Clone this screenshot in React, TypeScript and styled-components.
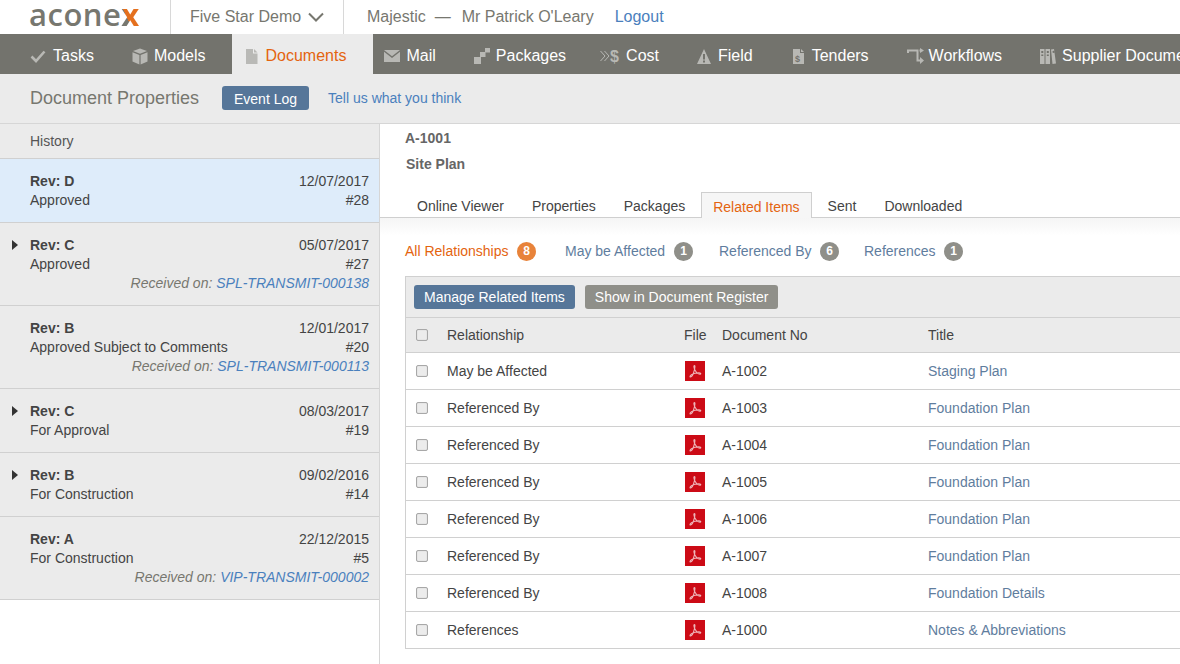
import React from "react";
import styled, { createGlobalStyle } from "styled-components";

const Global = createGlobalStyle`
  html, body { margin: 0; padding: 0; background: #fff; }
  body { font-family: "Liberation Sans", Arial, sans-serif; font-size: 14px; color: #444; }
  * { box-sizing: border-box; }
`;

const Page = styled.div`
  width: 1180px;
  height: 664px;
  overflow: hidden;
  display: flex;
  flex-direction: column;
`;

const TopBar = styled.header`
  height: 34px;
  display: flex;
  align-items: stretch;
  font-size: 16px;
  color: #77776f;
`;
const Logo = styled.div`
  width: 170px;
  padding: 0 0 0 29px;
  font-family: "Open Sans", sans-serif;
  font-size: 31px;
  font-weight: 600;
  letter-spacing: 0.5px;
  color: #77776f;
  line-height: 28px;
  height: 34px;
`;
const LogoX = styled.span`
  font-weight: 700;
  color: transparent;
  background: linear-gradient(to top right, #77776f 36%, #e4701e 36%);
  -webkit-background-clip: text;
  background-clip: text;
`;
const Project = styled.div`
  width: 174px;
  border-left: 1px solid #d8d8d8;
  border-right: 1px solid #d8d8d8;
  padding-left: 19px;
  display: flex;
  align-items: center;
  gap: 7px;
`;
const Who = styled.div`
  padding-left: 23px;
  display: flex;
  align-items: center;
  white-space: pre;
`;
const Dash = styled.span`
  margin: 0 11px 0 9px;
`;
const Logout = styled.a`
  margin-left: 21px;
  color: #4a80bd;
`;

const Nav = styled.nav`
  height: 40px;
  background: #73736d;
  display: flex;
  align-items: stretch;
  padding-left: 30px;
  font-size: 16px;
  color: #fff;
  white-space: nowrap;
  overflow: hidden;
`;
const NavItem = styled.a<{ $ml: number; $active?: boolean }>`
  margin-left: ${(p) => p.$ml}px;
  display: flex;
  align-items: center;
  flex: none;
  padding-top: 4px;
  ${(p) =>
    p.$active
      ? `background:#ebebeb;color:#e4640f;width:141px;padding-left:14px;`
      : ``}
`;
const NavIcon = styled.span<{ $w: number }>`
  width: ${(p) => p.$w}px;
  height: 20px;
  flex: none;
  display: flex;
  align-items: center;
  svg { display: block; }
`;

const SubHeader = styled.div`
  height: 50px;
  background: #ebebeb;
  border-bottom: 1px solid #d6d6d6;
  display: flex;
  align-items: center;
  padding: 0 0 1px 30px;
`;
const PageTitle = styled.h1`
  margin: 0;
  font-size: 18px;
  font-weight: 400;
  color: #77776f;
  width: 192px;
`;
const Button = styled.button<{ $grey?: boolean }>`
  height: 24px;
  border: 0;
  border-radius: 3px;
  background: ${(p) => (p.$grey ? "#8f8f89" : "#567699")};
  color: #fff;
  font: 14px "Liberation Sans", Arial, sans-serif;
  padding: 0 10px;
`;
const EventButton = styled(Button)`
  padding: 1px 12px 0;
`;
const Feedback = styled.a`
  margin-left: 19px;
  color: #4a80bd;
  font-size: 14px;
`;

const Body = styled.div`
  flex: 1;
  display: flex;
  min-height: 0;
`;
const Side = styled.aside`
  width: 380px;
  flex: none;
  border-right: 1px solid #d6d6d6;
`;
const HistoryHead = styled.div`
  height: 35px;
  background: #ebebeb;
  border-bottom: 1px solid #d0d0d0;
  padding: 8px 0 0 30px;
  line-height: 19px;
  color: #555;
`;
const Rev = styled.div<{ $selected?: boolean }>`
  display: grid;
  grid-template-columns: 18px 1fr auto;
  padding: 13px 10px 12px 12px;
  line-height: 19px;
  background: ${(p) => (p.$selected ? "#deecfa" : "#ebebeb")};
  border-bottom: 1px solid #d0d0d0;
  color: #444;
`;
const Caret = styled.span`
  width: 0;
  height: 0;
  margin-top: 4px;
  border-left: 6px solid #333;
  border-top: 5.500px solid transparent;
  border-bottom: 5.500px solid transparent;
`;
const RevName = styled.b`
  grid-column: 2;
  color: #444;
`;
const RevStatus = styled.span`
  grid-column: 2;
`;
const RevRight = styled.span`
  text-align: right;
`;
const Received = styled.div`
  grid-column: 2 / 4;
  text-align: right;
  font-style: italic;
  color: #77776f;
  a { color: #4a80bd; }
`;

const Main = styled.main`
  flex: 1;
  min-width: 0;
  padding-top: 5px;
`;
const DocNo = styled.div`
  margin-left: 25px;
  font-weight: 700;
  color: #666;
  line-height: 19px;
`;
const DocName = styled(DocNo)`
  margin: 7px 0 0 26px;
`;
const Tabs = styled.div`
  margin-top: 18px;
  height: 26px;
  padding-left: 25px;
  display: flex;
  gap: 4px;
  border-bottom: 1px solid #cfcfcf;
`;
const Tab = styled.a<{ $active?: boolean }>`
  height: 26px;
  padding: 5px 12px 0;
  line-height: 19px;
  color: ${(p) => (p.$active ? "#e4640f" : "#444")};
  ${(p) =>
    p.$active
      ? `background:#f6f6f6;border:1px solid #cfcfcf;border-bottom:0;padding:5px 11px 0;`
      : ``}
`;
const FilterWrap = styled.div`
  height: 58px;
  background: linear-gradient(#f5f5f5, #fff 18px);
  padding: 23px 0 0 25px;
  display: flex;
  align-items: flex-start;
`;
const Filter = styled.a<{ $w: number; $mr: number; $active?: boolean }>`
  width: ${(p) => p.$w}px;
  flex: none;
  display: flex;
  align-items: center;
  justify-content: space-between;
  height: 19px;
  margin-right: ${(p) => p.$mr}px;
  color: ${(p) => (p.$active ? "#e4640f" : "#5f7d9e")};
`;
const Badge = styled.span<{ $active?: boolean }>`
  width: 19px;
  height: 19px;
  margin-top: 2px;
  border-radius: 50%;
  background: ${(p) => (p.$active ? "#e8833a" : "#8f8f89")};
  color: #fff;
  font-size: 12px;
  font-weight: 700;
  text-align: center;
  line-height: 19px;
`;

const Table = styled.section`
  margin-left: 25px;
  border-left: 1px solid #d0d0d0;
  border-top: 1px solid #d0d0d0;
  width: 900px;
`;
const Toolbar = styled.div`
  height: 41px;
  background: #ebebeb;
  border-bottom: 1px solid #d0d0d0;
  padding: 8px 0 0 8px;
  display: flex;
  gap: 10px;
`;
const Row = styled.div<{ $head?: boolean }>`
  height: ${(p) => (p.$head ? 35 : 37)}px;
  display: grid;
  grid-template-columns: 41px 237px 38px 206px 1fr;
  align-items: center;
  background: ${(p) => (p.$head ? "#ebebeb" : "#fff")};
  border-bottom: 1px solid #d0d0d0;
  color: #444;
`;
const Check = styled.span`
  width: 12px;
  height: 12px;
  margin-left: 10px;
  border: 1px solid #a8a8a8;
  border-radius: 2px;
  background: #ececec;
  box-shadow: inset 0 0 1px #bbb;
`;
const TitleLink = styled.a`
  color: #5f7d9e;
`;
const Pdf = styled.span`
  width: 20px;
  height: 20px;
  margin-left: 1px;
  background: #cc0b16;
  display: flex;
  align-items: center;
  justify-content: center;
`;

const C = "#b8b8b4";
const Icons = {
  check: (
    <svg width="16" height="14" viewBox="0 0 16 14"><path d="M1.500 7.500l4.500 4.500L14.500 2.500" fill="none" stroke={C} strokeWidth="2.600" /></svg>
  ),
  cube: (
    <svg width="16" height="17" viewBox="0 0 16 17"><path d="M8 0.500l7 2.600-7 2.700-7-2.700z" fill={C} /><path d="M0.500 4.300l6.900 2.700v9.600l-6.900-3z" fill={C} /><path d="M15.500 4.300L8.600 7v9.600l6.900-3z" fill={C} /></svg>
  ),
  doc: (
    <svg width="12" height="15" viewBox="0 0 12 15"><path d="M0 0h7v4.500h4.500V15H0z" fill="#b9b9b6" /><path d="M8 0l3.500 3.500H8z" fill="#b9b9b6" /></svg>
  ),
  mail: (
    <svg width="16" height="12" viewBox="0 0 16 12"><path d="M0 0h16L8 6.200z" fill={C} /><path d="M0 1.800v10.200h16V1.800L8 8z" fill={C} /></svg>
  ),
  packages: (
    <svg width="16" height="16" viewBox="0 0 16 16"><rect x="0" y="9" width="7" height="7" fill={C} /><rect x="6" y="4" width="5.500" height="5" fill={C} /><rect x="11" y="0" width="5" height="4.500" fill={C} /></svg>
  ),
  cost: (
    <svg width="21" height="16" viewBox="0 0 21 16">
      <path d="M0.500 3l4.500 5-4.500 5M4.500 3L9 8l-4.500 5" fill="none" stroke={C} strokeWidth="1" />
      <text x="10" y="14" fontFamily="Liberation Sans, sans-serif" fontWeight="700" fontSize="16" fill={C}>$</text>
    </svg>
  ),
  field: (
    <svg width="14" height="15" viewBox="0 0 14 15"><path fillRule="evenodd" d="M7 0l7 15H0zM6 5v5.500h2V5zM6 11.500v2h2v-2z" fill={C} /></svg>
  ),
  tender: (
    <svg width="12" height="15" viewBox="0 0 12 15">
      <path d="M0 0h7v4h4v11H0z" fill={C} /><path d="M8 0l3 3H8z" fill={C} />
      <text x="2" y="12.500" fontFamily="Liberation Sans, sans-serif" fontWeight="700" fontSize="9" fill="#73736d">$</text>
    </svg>
  ),
  workflow: (
    <svg width="17" height="16" viewBox="0 0 17 16">
      <path d="M1 5V2.500h9.500v10H14" fill="none" stroke={C} strokeWidth="2" />
      <path d="M12.500 2.500H14" fill="none" stroke={C} strokeWidth="2" />
      <path d="M13 9l4 3.500-4 3.500zM13 0l4 2.500-4 2.500z" fill={C} />
    </svg>
  ),
  binders: (
    <svg width="16" height="15" viewBox="0 0 16 15">
      <path fillRule="evenodd" d="M0 0h4.500v15H0zM1.300 2v2h2V2zM1.300 5.500v1.500h2V5.500z" fill={C} />
      <path fillRule="evenodd" d="M5.500 0H10v15H5.500zM6.800 2v2h2V2zM6.800 5.500v1.500h2V5.500z" fill={C} />
      <path fillRule="evenodd" d="M11 0.500l3-.5 2 14.500-3.500.5zM12.500 2l.3 2 1.600-.2-.3-2z" fill={C} />
    </svg>
  ),
};

const navs = [
  { t: "Tasks", i: Icons.check, w: 23, ml: 0 },
  { t: "Models", i: Icons.cube, w: 22, ml: 38 },
  { t: "Documents", i: Icons.doc, w: 19, ml: 27, active: true },
  { t: "Mail", i: Icons.mail, w: 22, ml: 11 },
  { t: "Packages", i: Icons.packages, w: 22, ml: 38 },
  { t: "Cost", i: Icons.cost, w: 26, ml: 34 },
  { t: "Field", i: Icons.field, w: 21, ml: 38 },
  { t: "Tenders", i: Icons.tender, w: 19, ml: 40 },
  { t: "Workflows", i: Icons.workflow, w: 22, ml: 38 },
  { t: "Supplier Documents", i: Icons.binders, w: 22, ml: 38 },
];

const revs = [
  { r: "D", d: "12/07/2017", s: "Approved", n: "#28", sel: true },
  { r: "C", d: "05/07/2017", s: "Approved", n: "#27", caret: true, rec: "SPL-TRANSMIT-000138" },
  { r: "B", d: "12/01/2017", s: "Approved Subject to Comments", n: "#20", rec: "SPL-TRANSMIT-000113" },
  { r: "C", d: "08/03/2017", s: "For Approval", n: "#19", caret: true },
  { r: "B", d: "09/02/2016", s: "For Construction", n: "#14", caret: true },
  { r: "A", d: "22/12/2015", s: "For Construction", n: "#5", rec: "VIP-TRANSMIT-000002" },
];

const filters = [
  { t: "All Relationships", n: 8, w: 131, mr: 29, active: true },
  { t: "May be Affected", n: 1, w: 128, mr: 26 },
  { t: "Referenced By", n: 6, w: 120, mr: 25 },
  { t: "References", n: 1, w: 99, mr: 0 },
];

const rows = [
  ["May be Affected", "A-1002", "Staging Plan"],
  ["Referenced By", "A-1003", "Foundation Plan"],
  ["Referenced By", "A-1004", "Foundation Plan"],
  ["Referenced By", "A-1005", "Foundation Plan"],
  ["Referenced By", "A-1006", "Foundation Plan"],
  ["Referenced By", "A-1007", "Foundation Plan"],
  ["Referenced By", "A-1008", "Foundation Details"],
  ["References", "A-1000", "Notes & Abbreviations"],
];

const PdfMark = () => (
  <svg width="14" height="14" viewBox="0 0 14 14">
    <path
      d="M6.500 1.500c-1 0-.6 2.500.4 4.500 1 2 2 3.200 3.500 3.800 1.500.6 2.600.3 2.300-.4-.3-.7-3-.8-5.600-.2-2.600.6-4.800 2-5.100 3.200-.3 1 1 .8 2.300-.8C5.700 9.800 7.800 1.500 6.500 1.500z"
      fill="none"
      stroke="#eeb4b8"
      strokeWidth="1.100"
    />
  </svg>
);

export default function App() {
  return (
    <Page>
      <Global />
      <TopBar>
        <Logo>
          acone<LogoX>x</LogoX>
        </Logo>
        <Project>
          Five Star Demo
          <svg width="16" height="10" viewBox="0 0 16 10"><path d="M1 1.500l7 7 7-7" fill="none" stroke="#77776f" strokeWidth="2" /></svg>
        </Project>
        <Who>
          Majestic
          <Dash>—</Dash>
          {"Mr Patrick O'Leary"}
          <Logout>Logout</Logout>
        </Who>
      </TopBar>
      <Nav>
        {navs.map((n) => (
          <NavItem key={n.t} $ml={n.ml} $active={n.active}>
            <NavIcon $w={n.w}>{n.i}</NavIcon>
            {n.t}
          </NavItem>
        ))}
      </Nav>
      <SubHeader>
        <PageTitle>Document Properties</PageTitle>
        <EventButton>Event Log</EventButton>
        <Feedback>Tell us what you think</Feedback>
      </SubHeader>
      <Body>
        <Side>
          <HistoryHead>History</HistoryHead>
          {revs.map((r, i) => (
            <Rev key={i} $selected={r.sel}>
              {r.caret ? <Caret /> : <span />}
              <RevName>Rev: {r.r}</RevName>
              <RevRight>{r.d}</RevRight>
              <RevStatus>{r.s}</RevStatus>
              <RevRight>{r.n}</RevRight>
              {r.rec && (
                <Received>
                  Received on: <a>{r.rec}</a>
                </Received>
              )}
            </Rev>
          ))}
        </Side>
        <Main>
          <DocNo>A-1001</DocNo>
          <DocName>Site Plan</DocName>
          <Tabs>
            <Tab>Online Viewer</Tab>
            <Tab>Properties</Tab>
            <Tab>Packages</Tab>
            <Tab $active>Related Items</Tab>
            <Tab>Sent</Tab>
            <Tab>Downloaded</Tab>
          </Tabs>
          <FilterWrap>
            {filters.map((f) => (
              <Filter key={f.t} $w={f.w} $mr={f.mr} $active={f.active}>
                {f.t}
                <Badge $active={f.active}>{f.n}</Badge>
              </Filter>
            ))}
          </FilterWrap>
          <Table>
            <Toolbar>
              <Button>Manage Related Items</Button>
              <Button $grey>Show in Document Register</Button>
            </Toolbar>
            <Row $head>
              <Check />
              <span>Relationship</span>
              <span>File</span>
              <span>Document No</span>
              <span>Title</span>
            </Row>
            {rows.map((r) => (
              <Row key={r[1]}>
                <Check />
                <span>{r[0]}</span>
                <Pdf>
                  <PdfMark />
                </Pdf>
                <span>{r[1]}</span>
                <TitleLink>{r[2]}</TitleLink>
              </Row>
            ))}
          </Table>
        </Main>
      </Body>
    </Page>
  );
}
